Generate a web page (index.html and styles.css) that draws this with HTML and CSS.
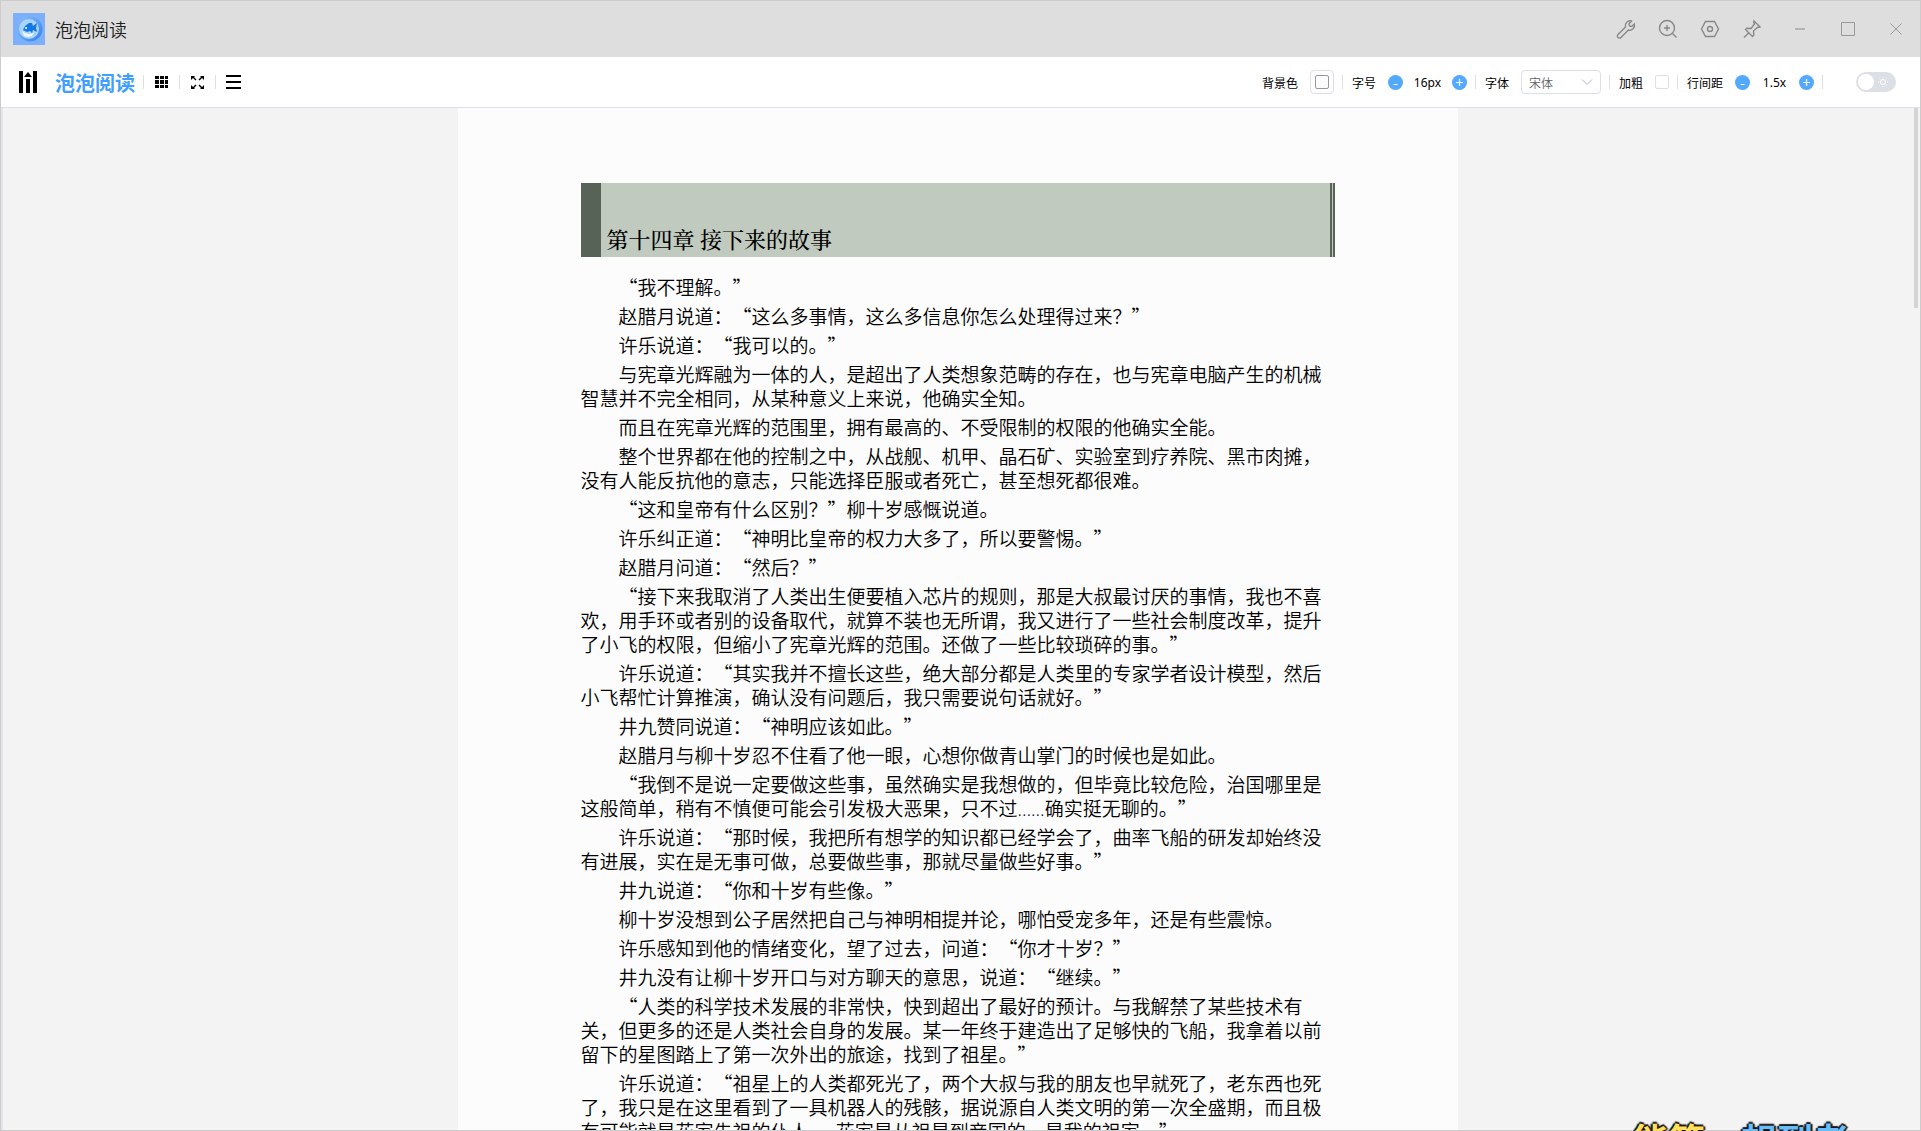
FILE: index.html
```html
<!DOCTYPE html>
<html lang="zh-CN">
<head>
    <meta charset="UTF-8">
    <meta name="viewport" content="width=device-width, initial-scale=1.0">
    <title>泡泡阅读</title>
    <link rel="stylesheet" href="styles.css">
</head>
<body>

    <div class="window">
        <header class="titlebar">
            <svg class="app-icon" viewBox="0 0 32 32">
                <defs>
                    <linearGradient id="bubble" x1="0" y1="0" x2="1" y2="1">
                        <stop offset="0" stop-color="#8cc3f5"/>
                        <stop offset="1" stop-color="#2f7ff5"/>
                    </linearGradient>
                </defs>
                <rect width="32" height="32" fill="#7db0fb"/>
                <circle cx="17" cy="16" r="12.500" fill="url(#bubble)"/>
                <circle cx="16" cy="16" r="10" fill="#a9d3f8"/>
                <path d="M9 18l3 2 4 1 5-1-2 3-4 1-4-1z" fill="#eef7ff"/>
                <path d="M10 17l2-4 4-3h3l1 3 4-3-1 5 1 4-4-2-1 3-2-2-3 1z" fill="#1477e6"/>
                <circle cx="13" cy="15" r="1" fill="#fff"/>
            </svg>
            <span class="app-name">泡泡阅读</span>
            <div class="window-tools">
                <button aria-label="工具"><svg viewBox="0 0 20 20"><path d="M2 15.500l7.500-7.500a4.800 4.800 0 0 1 6-6l-2.500 2.800.4 2.200 2.300.5 2.600-2.500a4.800 4.800 0 0 1-6 6L5 18.500a2 2 0 0 1-3-3z"/></svg></button>
                <button aria-label="放大"><svg viewBox="0 0 20 20"><circle cx="9" cy="9" r="7.500"/><path d="M14.500 14.500l4 4M9 6v6M6 9h6"/></svg></button>
                <button aria-label="设置"><svg viewBox="0 0 20 20"><path d="M5.500 2.500h9l4 7.500-4 7.500h-9L1.500 10z"/><circle cx="10" cy="10" r="2.500"/></svg></button>
                <button aria-label="置顶"><svg viewBox="0 0 20 20"><path d="M12 2l6 6-1.500.5-1-.3-4 3.800.3 4-1.300 1.500L3.500 10.500 5 9.200l4 .3L12.500 5l-.8-1.500zM7 13.500L2 18.500"/></svg></button>
                <button aria-label="最小化"><svg viewBox="0 0 20 20"><path class="minus" d="M5 10h10"/></svg></button>
                <button aria-label="最大化"><svg viewBox="0 0 20 20"><path class="thin" d="M3.500 3.500h13v13h-13z"/></svg></button>
                <button aria-label="关闭"><svg viewBox="0 0 20 20"><path class="thin" d="M4.500 4.500l11 11M15.500 4.500l-11 11"/></svg></button>
            </div>
        </header>

        <nav class="toolbar">
            <svg class="books" viewBox="0 0 20 24"><path d="M1 1h4v22H1zM15 1h4v22h-4zM8 9h4v14H8zM10 2l4 5H6z"/></svg>
            <a class="brand" href="#">泡泡阅读</a>
            <i class="line"></i>
            <button class="tool" aria-label="书架"><svg viewBox="0 0 16 16"><path d="M1 2h4v3H1zM6 2h4v3H6zM11 2h3v3h-3zM1 6h4v4H1zM6 6h4v4H6zM11 6h3v4h-3zM1 11h4v3H1zM6 11h4v3H6zM11 11h3v3h-3z"/></svg></button>
            <i class="line"></i>
            <button class="tool" aria-label="全屏"><svg viewBox="0 0 16 16"><path d="M1 2h4L4 3l2.500 2.500-1 1L3 4 1 6zM14 2v4l-2-2-2.500 2.500-1-1L11 3l-1-1zM1 15v-4l2 2 2.500-2.500 1 1L4 14l1 1zM14 15h-4l1-1-2.500-2.500 1-1L12 13l2-2z"/></svg></button>
            <i class="line"></i>
            <button class="tool" aria-label="目录"><svg viewBox="0 0 16 16"><path d="M0 1h15v2H0zM0 7h15v2H0zM0 13h15v2H0z"/></svg></button>

            <div class="options">
                <span>背景色</span>
                <button class="color" aria-label="背景色"><i></i></button>
                <i class="line"></i>
                <span>字号</span>
                <button class="round" aria-label="减小字号">-</button>
                <span class="value">16px</span>
                <button class="round plus" aria-label="增大字号">+</button>
                <i class="line"></i>
                <label for="font">字体</label>
                <div class="font">
                    <select id="font">
                        <option>宋体</option>
                    </select>
                    <svg viewBox="0 0 12 12"><path d="M1 3.500l5 5 5-5"/></svg>
                </div>
                <i class="line"></i>
                <label for="bold">加粗</label>
                <input type="checkbox" id="bold" class="bold">
                <i class="line"></i>
                <span>行间距</span>
                <button class="round" aria-label="减小行间距">-</button>
                <span class="value">1.5x</span>
                <button class="round plus" aria-label="增大行间距">+</button>
                <i class="line"></i>
                <button class="switch" role="switch" aria-checked="false" aria-label="夜间模式">
                    <i></i>
                    <svg viewBox="0 0 12 12"><circle cx="6" cy="6" r="2.500"/><path d="M6 1v1M6 10v1M1 6h1M10 6h1M2.500 2.500l.7.7M8.800 8.800l.7.7M9.500 2.500l-.7.7M3.200 8.800l-.7.7"/></svg>
                </button>
            </div>
        </nav>

        <div class="content">
            <main class="reader">
                <article class="page">
                    <h1>第十四章 接下来的故事</h1>
                    <p>“我不理解。”</p>
                    <p>赵腊月说道：“这么多事情，这么多信息你怎么处理得过来？”</p>
                    <p>许乐说道：“我可以的。”</p>
                    <p>与宪章光辉融为一体的人，是超出了人类想象范畴的存在，也与宪章电脑产生的机械智慧并不完全相同，从某种意义上来说，他确实全知。</p>
                    <p>而且在宪章光辉的范围里，拥有最高的、不受限制的权限的他确实全能。</p>
                    <p>整个世界都在他的控制之中，从战舰、机甲、晶石矿、实验室到疗养院、黑市肉摊，没有人能反抗他的意志，只能选择臣服或者死亡，甚至想死都很难。</p>
                    <p>“这和皇帝有什么区别？”柳十岁感慨说道。</p>
                    <p>许乐纠正道：“神明比皇帝的权力大多了，所以要警惕。”</p>
                    <p>赵腊月问道：“然后？”</p>
                    <p>“接下来我取消了人类出生便要植入芯片的规则，那是大叔最讨厌的事情，我也不喜欢，用手环或者别的设备取代，就算不装也无所谓，我又进行了一些社会制度改革，提升了小飞的权限，但缩小了宪章光辉的范围。还做了一些比较琐碎的事。”</p>
                    <p>许乐说道：“其实我并不擅长这些，绝大部分都是人类里的专家学者设计模型，然后小飞帮忙计算推演，确认没有问题后，我只需要说句话就好。”</p>
                    <p>井九赞同说道：“神明应该如此。”</p>
                    <p>赵腊月与柳十岁忍不住看了他一眼，心想你做青山掌门的时候也是如此。</p>
                    <p>“我倒不是说一定要做这些事，虽然确实是我想做的，但毕竟比较危险，治国哪里是这般简单，稍有不慎便可能会引发极大恶果，只不过<span class="dots">……</span>确实挺无聊的。”</p>
                    <p>许乐说道：“那时候，我把所有想学的知识都已经学会了，曲率飞船的研发却始终没有进展，实在是无事可做，总要做些事，那就尽量做些好事。”</p>
                    <p>井九说道：“你和十岁有些像。”</p>
                    <p>柳十岁没想到公子居然把自己与神明相提并论，哪怕受宠多年，还是有些震惊。</p>
                    <p>许乐感知到他的情绪变化，望了过去，问道：“你才十岁？”</p>
                    <p>井九没有让柳十岁开口与对方聊天的意思，说道：“继续。”</p>
                    <p>“人类的科学技术发展的非常快，快到超出了最好的预计。与我解禁了某些技术有关，但更多的还是人类社会自身的发展。某一年终于建造出了足够快的飞船，我拿着以前留下的星图踏上了第一次外出的旅途，找到了祖星。”</p>
                    <p>许乐说道：“祖星上的人类都死光了，两个大叔与我的朋友也早就死了，老东西也死了，我只是在这里看到了一具机器人的残骸，据说源自人类文明的第一次全盛期，而且极有可能就是花家先祖的仆人<span class="dots">……</span>花家是从祖星到帝国的，是我的祖家。”</p>
                </article>
            </main>
            <div class="scrollbar"><i></i></div>
        </div>
    </div>

    <div class="lyrics"><span>能等</span><span>想到老</span></div>

</body>
</html>
```
FILE: styles.css
```css
* {
    box-sizing: border-box;
}

body {
    margin: 0;
    font-family: "Noto Sans CJK SC", sans-serif;
    color: #000;
    overflow: hidden;
}

button {
    padding: 0;
    border: 0;
    background: none;
    font-family: inherit;
    cursor: pointer;
}

.window {
    display: flex;
    flex-direction: column;
    height: 100vh;
    border: 1px solid #ccc;
}

.titlebar {
    display: flex;
    align-items: center;
    flex: none;
    height: 56px;
    padding: 0 14px 0 12px;
    background-color: #dedede;
}

.app-icon {
    width: 32px;
    height: 32px;
    margin-right: 10px;
}

.app-name {
    font-size: 18px;
    font-weight: 350;
    line-height: 24px;
    color: #222;
}

.window-tools {
    display: flex;
    gap: 22px;
    margin-left: auto;
}

.window-tools svg {
    display: block;
    width: 20px;
    height: 20px;
    fill: none;
    stroke: #888;
    stroke-width: 1.4;
}

.window-tools .thin {
    stroke: #999;
    stroke-width: 1;
}

.window-tools .minus {
    stroke: #b4b4b4;
    stroke-width: 2;
}

.window-tools button:nth-child(n+5) {
    margin-left: 6px;
}

.toolbar {
    display: flex;
    align-items: center;
    flex: none;
    height: 51px;
    padding: 0 24px 0 17px;
    border-bottom: 1px solid #dcdfe6;
    background-color: #fff;
}

.books {
    width: 20px;
    height: 24px;
    margin-right: 17px;
}

.brand {
    margin-right: 8px;
    font-size: 20px;
    font-weight: bold;
    color: #409eff;
    text-decoration: none;
}

.line {
    width: 1px;
    height: 14px;
    background-color: #dcdfe6;
}

.tool {
    margin: 0 9px 0 10px;
}

.tool svg {
    display: block;
    width: 16px;
    height: 16px;
}

.options {
    display: flex;
    align-items: center;
    margin-left: auto;
    font-size: 12px;
}

.options > span,
.options > label {
    white-space: nowrap;
}

.options .line {
    margin: 0 9px 0 8px;
}

.options .value {
    width: 49px;
    font-family: "Noto Sans", sans-serif;
    text-align: center;
}

.color {
    display: flex;
    align-items: center;
    justify-content: center;
    width: 24px;
    height: 24px;
    margin-left: 12px;
    border: 1px solid #dcdfe6;
    border-radius: 4px;
}

.color i {
    width: 14px;
    height: 14px;
    border: 1px solid #999;
    border-radius: 2px;
    background-color: #fcfcfc;
}

.round {
    width: 15px;
    height: 15px;
    margin-left: 12px;
    border-radius: 50%;
    background-color: #53a8ff;
    color: #fff;
    font-size: 14px;
    line-height: 14px;
}

.round.plus {
    margin-left: 0;
}

.font {
    position: relative;
    margin-left: 12px;
}

.font select {
    display: block;
    width: 80px;
    height: 24px;
    padding: 0 7px;
    border: 1px solid #dcdfe6;
    border-radius: 4px;
    appearance: none;
    background: #fff;
    font-family: inherit;
    font-size: 12px;
    font-weight: 350;
    color: #606266;
}

.font svg {
    position: absolute;
    top: 6px;
    right: 8px;
    width: 12px;
    height: 12px;
    fill: none;
    stroke: #b4b8c0;
    pointer-events: none;
}

.bold {
    width: 14px;
    height: 14px;
    margin: 0 0 0 12px;
    border: 1px solid #dcdfe6;
    border-radius: 2px;
    appearance: none;
    background-color: #fff;
}

.switch {
    display: flex;
    align-items: center;
    justify-content: space-between;
    width: 40px;
    height: 20px;
    margin-left: 24px;
    padding: 0 7px 0 2px;
    border-radius: 10px;
    background-color: #dcdfe6;
}

.switch i {
    width: 16px;
    height: 16px;
    border-radius: 50%;
    background-color: #fff;
}

.switch svg {
    width: 12px;
    height: 12px;
    fill: none;
    stroke: #fff;
}

.content {
    display: flex;
    flex: 1;
    min-height: 0;
    border-left: 2px solid #e4e6eb;
    background-color: #f3f3f3;
}

.reader {
    flex: 1;
    overflow-y: auto;
    scrollbar-width: none;
}

.scrollbar {
    width: 8px;
    padding: 0 2px;
}

.scrollbar i {
    display: block;
    height: 200px;
    background-color: #d4d4d4;
}

.page {
    max-width: 1000px;
    margin: 0 auto;
    padding: 75px 123px;
    background-color: #fcfcfc;
    text-spacing-trim: space-all;
}

.page h1 {
    margin: 0 0 18px;
    padding: 40px 6px 2px;
    border-left: 20px solid #586357;
    border-right: 5px double #586357;
    background-color: #c0cabe;
    font-family: "Noto Serif CJK SC", "Noto Sans CJK SC", serif;
    font-size: 22px;
    font-weight: 500;
    line-height: 32px;
}

.page p {
    margin: 0 0 5px;
    font-size: 19px;
    font-weight: 350;
    line-height: 24px;
    text-indent: 2em;
}

.dots {
    font-family: "Open Sans", sans-serif;
    line-height: 1;
}

/* desktop lyrics floating over the window */
.lyrics {
    position: absolute;
    right: 72px;
    bottom: 0;
    display: flex;
    gap: 36px;
    height: 17px;
    overflow: hidden;
    font-size: 36px;
    font-weight: bold;
    line-height: 50px;
    color: #ffdf5c;
    text-shadow: 0 0 2px #000, 2px 0 1px #222, -2px 0 1px #222, 0 2px 1px #222, 0 -2px 1px #222;
}

.lyrics span + span {
    color: #66bdf7;
}
```
